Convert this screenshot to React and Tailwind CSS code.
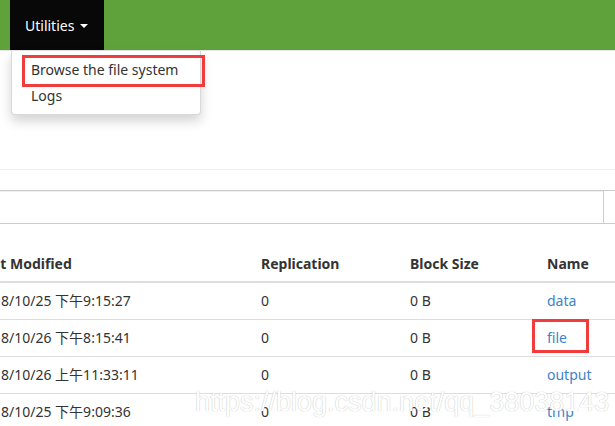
import React from 'react';

const rows = [
  { modified: '2018/10/25 下午9:15:27', replication: '0', blockSize: '0 B', name: 'data' },
  { modified: '2018/10/26 下午8:15:41', replication: '0', blockSize: '0 B', name: 'file' },
  { modified: '2018/10/26 上午11:33:11', replication: '0', blockSize: '0 B', name: 'output' },
  { modified: '2018/10/25 下午9:09:36', replication: '0', blockSize: '0 B', name: 'tmp' },
];

export default function App() {
  return (
    <div className="relative w-[615px] h-[426px] overflow-hidden bg-white text-[14px] leading-[20px] text-[#333] font-['Noto_Sans','Noto_Sans_CJK_SC',sans-serif]">
      {/* Navbar */}
      <nav className="h-[50px] bg-[#5fa23c] flex">
        <div className="ml-[10px] w-[94px] bg-[#080808] text-white flex items-center pl-[15px] pt-[2px]">
          Utilities
          <span className="ml-[6px] inline-block w-0 h-0 border-x-[4px] border-x-transparent border-t-[4px] border-t-white" />
        </div>
      </nav>
      <div className="h-px bg-[#e5e5e5]" />

      {/* Page header rule */}
      <div className="h-[119px] border-b border-[#eee]" />

      {/* Input group */}
      <div className="mt-[20px] -ml-[20px] w-[700px] flex h-[34px]">
        <div className="w-[624px] border border-[#ccc] shadow-[inset_0_1px_1px_rgba(0,0,0,0.075)]" />
        <div className="flex-1 border-y border-r border-[#ccc]" />
      </div>

      {/* Files table */}
      <div className="mt-[21px] -ml-[31px]">
        <table className="table-fixed w-[700px] border-collapse">
          <thead>
            <tr className="border-b-2 border-[#ddd]">
              <th className="w-[284px] px-[8px] pt-[9px] pb-[7px] text-left font-bold">Last Modified</th>
              <th className="w-[149px] px-[8px] pt-[9px] pb-[7px] text-left font-bold">Replication</th>
              <th className="w-[137px] px-[8px] pt-[9px] pb-[7px] text-left font-bold">Block Size</th>
              <th className="px-[8px] pt-[9px] pb-[7px] text-left font-bold">Name</th>
            </tr>
          </thead>
          <tbody>
            {rows.map((r) => (
              <tr key={r.name} className="border-t border-[#ddd] first:border-t-0">
                <td className="px-[8px] py-[8px] whitespace-nowrap">{r.modified}</td>
                <td className="px-[8px] py-[8px]">{r.replication}</td>
                <td className="px-[8px] py-[8px]">{r.blockSize}</td>
                <td className="px-[8px] py-[8px]">
                  <a href="#" className="text-[#3d84c8]">{r.name}</a>
                </td>
              </tr>
            ))}
          </tbody>
        </table>
      </div>

      {/* Utilities dropdown */}
      <div className="absolute left-[11px] top-[51px] w-[190px] pt-[6px] pb-[5px] bg-white border border-[rgba(0,0,0,0.15)] border-t-0 rounded-b-[4px] shadow-[0_6px_12px_rgba(0,0,0,0.175)]">
        <div className="px-[19px] py-[3px] whitespace-nowrap">Browse the file system</div>
        <div className="px-[19px] py-[3px]">Logs</div>
      </div>

      {/* Annotation boxes */}
      <div className="absolute left-[22px] top-[55px] w-[183px] h-[32px] border-[3px] border-[#f23b3b]" />
      <div className="absolute left-[532px] top-[319px] w-[57px] h-[34px] border-[3px] border-[#f23b3b]" />

      {/* Watermark */}
      <div className="absolute left-[195px] top-[385px] text-[27px] leading-[34px] text-white whitespace-nowrap font-['Liberation_Sans',sans-serif] [text-shadow:0_0_1px_#aaa]">
        https://blog.csdn.net/qq_38038143
      </div>
    </div>
  );
}
